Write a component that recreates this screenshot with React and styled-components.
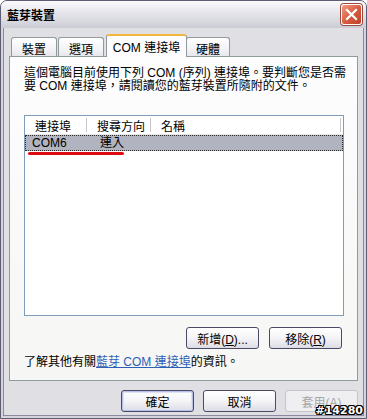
import styled, { createGlobalStyle } from "styled-components";

const GlobalStyle = createGlobalStyle`
  html, body {
    margin: 0;
    padding: 0;
    background: #ffffff;
  }
  body {
    font-family: "Liberation Sans", "Noto Sans CJK TC", sans-serif;
    font-size: 12px;
    color: #000;
  }
`;

const tabs = [
  { label: "裝置", width: 46 },
  { label: "選項", width: 46 },
  { label: "COM 連接埠", width: 81, active: true },
  { label: "硬體", width: 44 },
];

const App = () => {
  return (
    <>
      <GlobalStyle />
      <Window>
        <TitleBar>
          <Title>藍芽裝置</Title>
          <CloseButton>
            <svg width="13" height="13" viewBox="0 0 13 13">
              <path
                d="M2 2 L11 11 M11 2 L2 11"
                stroke="#fff"
                strokeWidth="2.2"
                strokeLinecap="square"
              />
            </svg>
          </CloseButton>
        </TitleBar>
        <Client>
          <TabRow>
            {tabs.map((t) => (
              <Tab key={t.label} $active={t.active} $width={t.width}>
                {t.label}
              </Tab>
            ))}
          </TabRow>
          <Panel>
            <Intro>
              這個電腦目前使用下列 COM (序列) 連接埠。要判斷您是否需
              <br />
              要 COM 連接埠，請閱讀您的藍芽裝置所隨附的文件。
            </Intro>
            <ListView>
              <Header>
                <HeadCell $width={62}>連接埠</HeadCell>
                <HeadCell $width={64}>搜尋方向</HeadCell>
                <HeadCell $last>名稱</HeadCell>
              </Header>
              <Row>
                <Cell $width={62}>COM6</Cell>
                <Cell $width={64}>連入</Cell>
                <Cell />
              </Row>
              <Marker />
            </ListView>
            <ListButtons>
              <Button>
                新增(<u>D</u>)...
              </Button>
              <Button>
                移除(<u>R</u>)
              </Button>
            </ListButtons>
            <Info>
              了解其他有關<Link>藍芽 COM 連接埠</Link>的資訊。
            </Info>
          </Panel>
          <Footer>
            <Button $default>確定</Button>
            <Button>取消</Button>
            <Button disabled>
              套用(<u>A</u>)
            </Button>
          </Footer>
          <Stamp>#14280</Stamp>
        </Client>
      </Window>
    </>
  );
};

export default App;

const Window = styled.div`
  position: relative;
  width: 367px;
  height: 419px;
  box-sizing: border-box;
  display: flex;
  flex-direction: column;
  background: #d4d4dc;
  border: 1px solid #5c5c72;
  border-radius: 7px 7px 0 0;
  overflow: hidden;
`;

const TitleBar = styled.div`
  height: 27px;
  flex: none;
  display: flex;
  align-items: center;
  justify-content: space-between;
  padding: 0 4px 0 6px;
  background: linear-gradient(#fbfbfd, #e6e6ec 40%, #d6d6de 80%, #cbcbd5);
`;

const Title = styled.div`
  font-weight: bold;
  font-size: 12px;
  color: #000;
  letter-spacing: 0;
`;

const CloseButton = styled.div`
  width: 19px;
  height: 19px;
  display: flex;
  align-items: center;
  justify-content: center;
  border: 1px solid #ffffff;
  border-radius: 3px;
  background: linear-gradient(135deg, #f09b84, #d55a3f 55%, #c0402a);
  box-shadow: 0 0 0 1px #9a4a40;
`;

const Client = styled.div`
  flex: 1;
  display: flex;
  flex-direction: column;
  margin: 0 2px 2px 2px;
  padding: 6px 5px 0 5px;
  background: #e0dfe3;
  border: 1px solid #8a8a9e;
  border-top: none;
`;

const TabRow = styled.div`
  height: 23px;
  display: flex;
  align-items: flex-end;
  padding-left: 2px;
`;

const Tab = styled.div`
  box-sizing: border-box;
  width: ${(p) => p.$width}px;
  height: ${(p) => (p.$active ? 23 : 20)}px;
  display: flex;
  align-items: center;
  justify-content: center;
  padding-top: ${(p) => (p.$active ? 0 : 1)}px;
  margin: ${(p) => (p.$active ? "0 0 0 1px" : "0 1px 0 0")};
  border: 1px solid #919b9c;
  border-bottom: none;
  border-radius: 3px 3px 0 0;
  background: ${(p) =>
    p.$active ? "#fcfcfe" : "linear-gradient(#ffffff, #f3f3f7 60%, #e4e4ea)"};
  border-top: ${(p) => (p.$active ? "2px solid #f3b63c" : "1px solid #919b9c")};
  position: relative;
  z-index: ${(p) => (p.$active ? 2 : 0)};
  font-size: 12px;
  white-space: nowrap;
  &:last-child {
    margin-left: -1px;
  }
`;

const Panel = styled.div`
  position: relative;
  z-index: 1;
  margin-top: -1px;
  height: 325px;
  box-sizing: border-box;
  border: 1px solid #919b9c;
  background: linear-gradient(#fdfdfe, #f6f6f4);
  padding: 10px 13px 0 14px;
  display: flex;
  flex-direction: column;
`;

const Intro = styled.div`
  line-height: 13px;
  white-space: nowrap;
  font-size: 12px;
`;

const ListView = styled.div`
  position: relative;
  margin-top: 22px;
  height: 201px;
  box-sizing: border-box;
  border: 1px solid #7f9db9;
  background: #ffffff;
`;

const Header = styled.div`
  display: flex;
  height: 19px;
  box-sizing: border-box;
  border-bottom: 1px solid #e6e6ea;
  background: #ffffff;
`;

const HeadCell = styled.div`
  box-sizing: border-box;
  width: ${(p) => (p.$width ? `${p.$width}px` : "auto")};
  flex: ${(p) => (p.$last ? 1 : "none")};
  display: flex;
  align-items: center;
  padding-left: 10px;
  margin-right: ${(p) => (p.$last ? 2 : 0)}px;
  border-right: 1px solid #c6c6ce;
  background-clip: padding-box;
  height: 14px;
  align-self: center;
  font-size: 12px;
`;

const Row = styled.div`
  display: flex;
  height: 16px;
  box-sizing: border-box;
  background: #b1b3be;
  border: 1px dotted #2a2a2a;
`;

const Cell = styled.div`
  width: ${(p) => (p.$width ? `${p.$width}px` : "auto")};
  flex: ${(p) => (p.$width ? "none" : 1)};
  padding-left: 6px;
  line-height: 14px;
  font-size: 12px;
`;

const Marker = styled.div`
  position: absolute;
  left: 3px;
  top: 36px;
  width: 96px;
  height: 3px;
  border-radius: 2px;
  background: #dd0a14;
`;

const ListButtons = styled.div`
  display: flex;
  justify-content: flex-end;
  gap: 10px;
  margin-top: 11px;
  padding-right: 2px;
`;

const Button = styled.button`
  width: 73px;
  height: 22px;
  box-sizing: border-box;
  padding: 0;
  font-family: "Liberation Sans", "Noto Sans CJK TC", sans-serif;
  font-size: 12px;
  color: #000;
  border: 1px solid ${(p) => (p.disabled ? "#c4c4cc" : "#4a4a66")};
  border-radius: 3px;
  background: ${(p) =>
    p.disabled
      ? "#efeff1"
      : "linear-gradient(#ffffff, #f4f4f7 50%, #dcdce4)"};
  box-shadow: ${(p) =>
    p.$default ? "inset 0 0 0 1px #b8c0e6, inset 0 0 0 2px #dde2f6" : "none"};
  &:disabled {
    color: #a6a6a6;
  }
  u {
    text-decoration: underline;
  }
`;

const Info = styled.div`
  margin-top: 7px;
  line-height: 13px;
  font-size: 12px;
`;

const Link = styled.span`
  color: #2e5fb5;
  text-decoration: underline;
`;

const Footer = styled.div`
  display: flex;
  justify-content: flex-end;
  gap: 9px;
  margin-top: 9px;
`;

const Stamp = styled.div`
  position: absolute;
  right: 3px;
  bottom: 1px;
  font-family: "DejaVu Sans", sans-serif;
  font-weight: bold;
  font-size: 11px;
  color: #ffffff;
  letter-spacing: 0;
  text-shadow: -1px -1px 0 #000, 1px -1px 0 #000, -1px 1px 0 #000,
    1px 1px 0 #000, 0 1px 0 #000, 0 -1px 0 #000, 1px 0 0 #000, -1px 0 0 #000;
  z-index: 5;
`;
